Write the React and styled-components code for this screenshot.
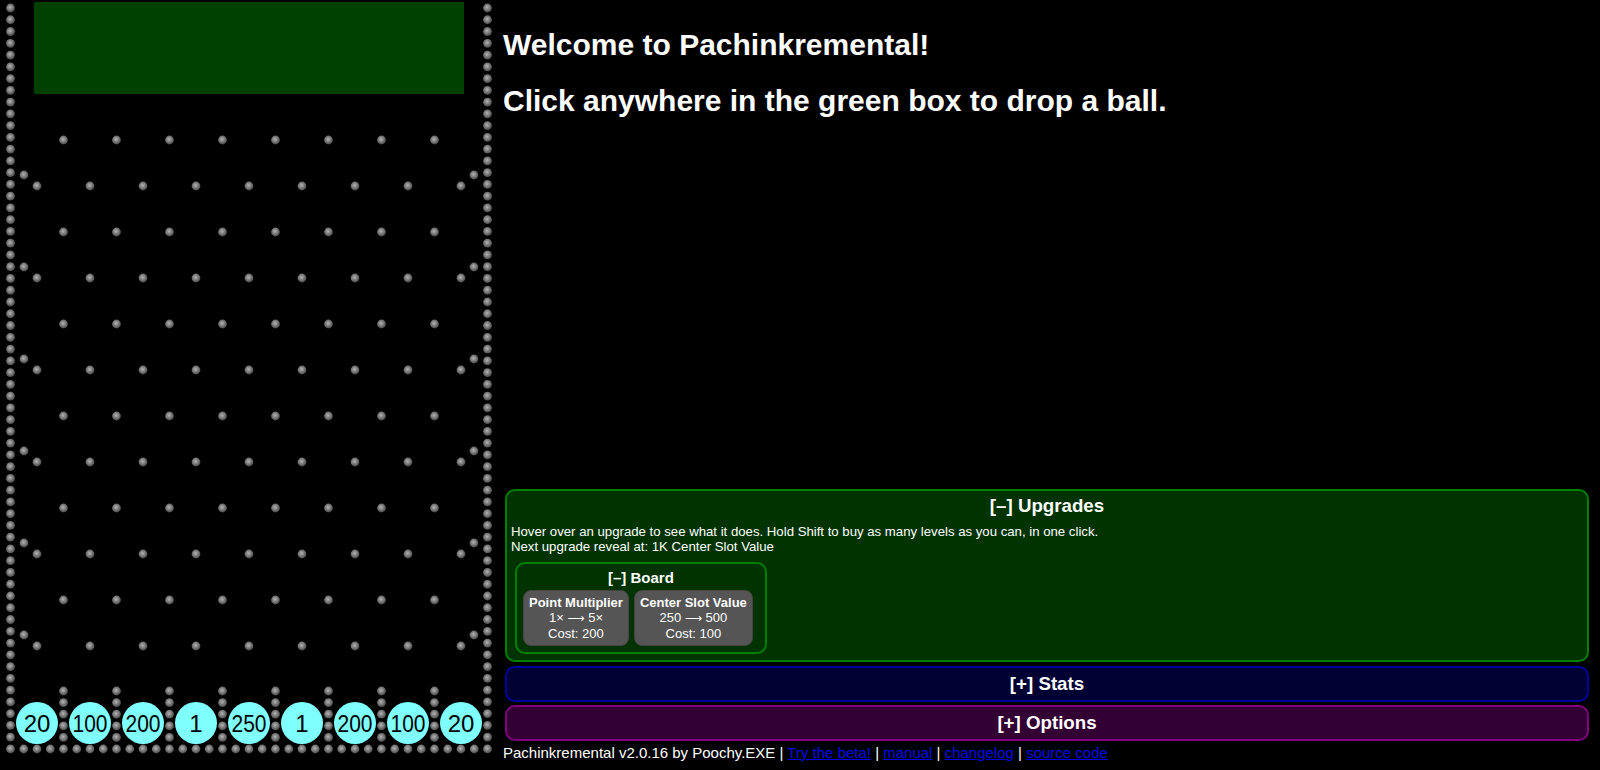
import React from 'react'
import styled, { createGlobalStyle } from 'styled-components'

const GlobalStyle = createGlobalStyle`
  html, body {
    margin: 0;
    padding: 0;
    background: #000;
    color: #fff;
    font-family: "Liberation Sans", Arial, sans-serif;
  }
`

const Page = styled.div`
  display: flex;
  height: 100vh;
  overflow: hidden;
`

const BoardSvg = styled.svg`
  display: block;
  flex: 0 0 498px;
  width: 498px;
  height: 770px;
`

const Side = styled.div`
  flex: 1;
  min-width: 0;
  display: flex;
  flex-direction: column;
  box-sizing: border-box;
  padding: 0 11px 8px 5px;
`

const Headline = styled.h2`
  margin: 22px 0 0;
  font-size: 30px;
  line-height: 34px;
  font-weight: bold;

  &:first-child {
    margin-top: 28px;
  }
`

const Bottom = styled.div`
  margin-top: auto;
  display: flex;
  flex-direction: column;
`

const Panel = styled.section`
  margin: ${props => props.$gap}px 0 0 2px;
  border: 2px solid ${props => props.$border};
  background: ${props => props.$bg};
  border-radius: 10px;
  padding: ${props => props.$open ? '3px 4px 6px' : '4px'};
`

const PanelTitle = styled.div`
  text-align: center;
  font-size: 18.72px;
  line-height: 24px;
  font-weight: bold;
`

const Note = styled.div`
  margin-top: 6px;
  font-size: 13.2px;
  line-height: 15px;
`

const Group = styled.div`
  width: fit-content;
  margin: 8px 0 0 4px;
  border: 2px solid #008000;
  border-radius: 10px;
  padding: 6px 12px 6px 6px;
`

const GroupTitle = styled.div`
  text-align: center;
  font-size: 15px;
  line-height: 16px;
  font-weight: bold;
  padding-left: 6px;
`

const Buttons = styled.div`
  display: flex;
  gap: 5px;
  margin-top: 4px;
`

const UpgradeButton = styled.div`
  background: #555;
  border: 1px solid #444;
  border-radius: 8px;
  padding: 4px 5px;
  text-align: center;
  font-size: 13px;
  line-height: 15px;

  b {
    display: block;
  }
`

const Arrow = styled.span`
  font-family: "DejaVu Sans", sans-serif;
  font-size: 12px;
`

const Footer = styled.div`
  margin-top: 3px;
  font-size: 15px;
  line-height: 18px;
  white-space: nowrap;

  a {
    color: #0000ee;
    text-decoration: underline;
  }
`

const WALL_L = 10.5
const WALL_R = 487.5
const SLOTS = [20, 100, 200, 1, 250, 1, 200, 100, 20]

function buildPegs() {
  const pegs = []
  for (let i = 0; i < 64; i++) {
    const y = 8 + i * 11.76
    pegs.push([WALL_L, y], [WALL_R, y])
  }
  for (let k = 0; k < 6; k++) {
    const ya = 140 + 92 * k
    const yb = 186 + 92 * k
    for (let j = 0; j < 8; j++) pegs.push([63.5 + 53 * j, ya])
    for (let j = 0; j < 9; j++) pegs.push([37 + 53 * j, yb])
    pegs.push([24, yb - 11], [474, yb - 11])
  }
  for (let j = 0; j < 8; j++) {
    for (let m = 0; m < 5; m++) pegs.push([63.5 + 53 * j, 691 + 11.6 * m])
  }
  for (let i = 1; i < 36; i++) pegs.push([WALL_L + 13.25 * i, 749])
  return pegs
}

const pegs = buildPegs()

function Board() {
  return (
    <BoardSvg viewBox="0 0 498 770">
      <defs>
        <radialGradient id="peg" cx="0.45" cy="0.42" r="0.6">
          <stop offset="0" stopColor="#b4b4b4" />
          <stop offset="1" stopColor="#454545" />
        </radialGradient>
      </defs>
      <rect x="34" y="2" width="430" height="92" fill="#004000" />
      {pegs.map(([x, y], i) => (
        <circle key={i} cx={x} cy={y} r="4.4" fill="url(#peg)" />
      ))}
      {SLOTS.map((v, j) => (
        <g key={'s' + j}>
          <circle cx={37 + 53 * j} cy="723" r="21" fill="#80ffff" />
          <text
            x={37 + 53 * j}
            y="731.8"
            textAnchor="middle"
            fontSize="24"
            fontFamily='"Liberation Sans", Arial, sans-serif'
            fill="#000"
            textLength={String(v).length > 2 ? 35 : undefined}
            lengthAdjust="spacingAndGlyphs"
          >
            {v}
          </text>
        </g>
      ))}
    </BoardSvg>
  )
}

export default function App() {
  return (
    <Page>
      <GlobalStyle />
      <Board />
      <Side>
        <Headline>Welcome to Pachinkremental!</Headline>
        <Headline>Click anywhere in the green box to drop a ball.</Headline>
        <Bottom>
          <Panel $open $gap={0} $border="#008000" $bg="#003300">
            <PanelTitle>[–] Upgrades</PanelTitle>
            <Note>
              Hover over an upgrade to see what it does. Hold Shift to buy as many levels as you can, in one click.
              <br />
              Next upgrade reveal at: 1K Center Slot Value
            </Note>
            <Group>
              <GroupTitle>[–] Board</GroupTitle>
              <Buttons>
                <UpgradeButton>
                  <b>Point Multiplier</b>
                  1× <Arrow>⟶</Arrow> 5×
                  <br />
                  Cost: 200
                </UpgradeButton>
                <UpgradeButton>
                  <b>Center Slot Value</b>
                  250 <Arrow>⟶</Arrow> 500
                  <br />
                  Cost: 100
                </UpgradeButton>
              </Buttons>
            </Group>
          </Panel>
          <Panel $gap={4} $border="#0000a0" $bg="#000033">
            <PanelTitle>[+] Stats</PanelTitle>
          </Panel>
          <Panel $gap={3} $border="#800080" $bg="#330033">
            <PanelTitle>[+] Options</PanelTitle>
          </Panel>
          <Footer>
            Pachinkremental v2.0.16 by Poochy.EXE | <a href="#beta">Try the beta!</a> | <a href="#manual">manual</a> |{' '}
            <a href="#changelog">changelog</a> | <a href="#source">source code</a>
          </Footer>
        </Bottom>
      </Side>
    </Page>
  )
}
